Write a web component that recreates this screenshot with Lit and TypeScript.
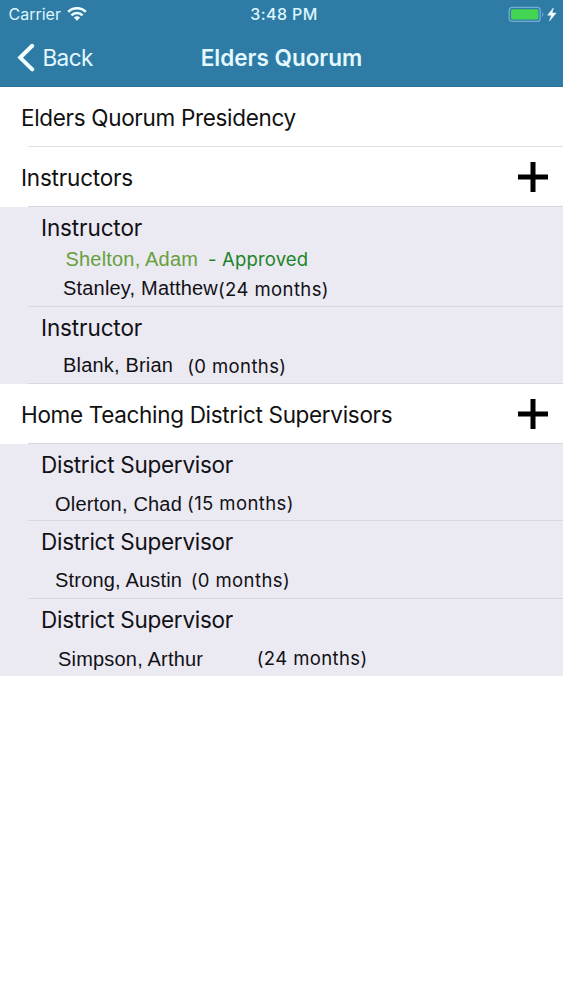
import { LitElement, html, css } from "lit";
import { customElement, property } from "lit/decorators.js";

interface Line {
  name: string;
  note: string;
  kind: string;
}

interface Calling {
  title: string;
  lines: Line[];
}

interface Section {
  title: string;
  addable: boolean;
  callings: Calling[];
}

const SECTIONS: Section[] = [
  { title: "Elders Quorum Presidency", addable: false, callings: [] },
  {
    title: "Instructors",
    addable: true,
    callings: [
      {
        title: "Instructor",
        lines: [
          { name: "Shelton, Adam", note: "- Approved", kind: "proposed" },
          { name: "Stanley, Matthew", note: "(24 months)", kind: "current" },
        ],
      },
      { title: "Instructor", lines: [{ name: "Blank, Brian", note: "(0 months)", kind: "single" }] },
    ],
  },
  {
    title: "Home Teaching District Supervisors",
    addable: true,
    callings: [
      { title: "District Supervisor", lines: [{ name: "Olerton, Chad", note: "(15 months)", kind: "first" }] },
      { title: "District Supervisor", lines: [{ name: "Strong, Austin", note: "(0 months)", kind: "second" }] },
      { title: "District Supervisor", lines: [{ name: "Simpson, Arthur", note: "(24 months)", kind: "third" }] },
    ],
  },
];

@customElement("status-bar")
class StatusBar extends LitElement {
  static styles = css`
    :host { display: grid; grid-template-columns: 1fr auto 1fr; height: 29px; align-items: center; color: #dff6ff; }
    .left { display: flex; align-items: center; padding-left: 8.5px; gap: 6px; }
    .carrier { font-size: 16px; letter-spacing: 0; line-height: 29px; }
    .time { font-size: 16px; font-weight: 500; letter-spacing: 0.4px; line-height: 29px; padding-left: 5px; }
    .right { display: flex; justify-content: flex-end; align-items: center; padding-right: 5px; }
    svg { display: block; }
  `;
  render() {
    return html`
      <div class="left">
        <span class="carrier">Carrier</span>
        <svg width="20" height="15" viewBox="0 0 20 15" fill="none" stroke="#f2ffff" stroke-width="2.6">
          <path d="M1.2 4.9a12.4 12.4 0 0 1 17.6 0" />
          <path d="M4.4 8.4a7.9 7.9 0 0 1 11.2 0" />
          <path d="M10 13.7 6.9 10.6a4.4 4.4 0 0 1 6.2 0z" fill="#f2ffff" stroke="none" />
        </svg>
      </div>
      <span class="time">3:48 PM</span>
      <div class="right">
        <svg width="50" height="18" viewBox="0 0 50 18">
          <rect x="1.2" y="1.4" width="31" height="14" rx="3" fill="none" stroke="#74abd3" stroke-width="1.3" />
          <rect x="3" y="3.2" width="27.4" height="10.4" rx="1.6" fill="#43d551" />
          <path d="M34.2 6.1q2.4 2.4 0 4.8z" fill="#74abd3" />
          <path d="M45.3 2 39.6 9.2h3.8l-1.9 5.8 6.6-7.9h-4z" fill="#f4ffff" stroke="#f4ffff" stroke-width=".5" />
        </svg>
      </div>
    `;
  }
}

@customElement("nav-bar")
class NavBar extends LitElement {
  static styles = css`
    :host { display: grid; grid-template-columns: 1fr auto 1fr; height: 58px; align-items: center; color: #e4f8ff; }
    .back { display: flex; align-items: center; padding-left: 17px; gap: 7.5px; line-height: 58px; font-size: 22.5px; letter-spacing: -0.6px; }
    .title { font-size: 22.5px; font-weight: 600; letter-spacing: 0; line-height: 58px; }
    svg { display: block; }
  `;
  render() {
    return html`
      <div class="back">
        <svg width="18" height="30" viewBox="0 0 18 30" fill="none" stroke="#f2ffff" stroke-width="4" stroke-linecap="round" stroke-linejoin="miter">
          <path d="M15.2 2.8 3.2 14.6l12 11.8" />
        </svg>
        <span>Back</span>
      </div>
      <span class="title">Elders Quorum</span>
    `;
  }
}

@customElement("calling-row")
class CallingRow extends LitElement {
  @property({ attribute: false }) calling!: Calling;
  static styles = css`
    :host { display: block; padding: 7px 0 0 41px; box-sizing: border-box; height: 77.3px; }
    :host(.tall) { height: 99.8px; }
    .title { font-size: 22.5px; line-height: 28px; letter-spacing: -0.12px; color: #111116; }
    .title.long { letter-spacing: -0.27px; }
    .line { display: flex; height: 24px; line-height: 24px; white-space: pre; color: #111116; }
    .name { font: 20px/24px "Liberation Sans", Arial, sans-serif; letter-spacing: 0.19px; }
    .note { font-size: 18.5px; letter-spacing: 0.4px; }
    .proposed { padding: 5px 0 0 24.5px; }
    .proposed .name { color: #66a03c; }
    .proposed .note { color: #1c8428; margin-left: 10px; letter-spacing: 0.15px; }
    .current { padding: 5px 0 0 22px; }
    .current .note { margin-top: 1px; }
    .single { padding: 11px 0 0 22px; }
    .single .note { margin: 1px 0 0 14px; }
    .first { padding: 13px 0 0 14px; }
    .first .note { margin: -1px 0 0 5px; }
    .second { padding: 12px 0 0 14px; }
    .second .note { margin-left: 8.5px; }
    .third { padding: 13px 0 0 17px; }
    .third .note { margin: -1px 0 0 53.5px; }
  `;
  render() {
    return html`
      <div class="title ${this.calling.title.length > 12 ? "long" : ""}">${this.calling.title}</div>
      ${this.calling.lines.map(
        (l) => html`<div class="line ${l.kind}"><span class="name">${l.name}</span><span class="note">${l.note}</span></div>`
      )}
    `;
  }
}

@customElement("app-root")
class AppRoot extends LitElement {
  static styles = css`
    :host { display: block; height: 1000px; background: #fff; overflow: hidden; font-family: Inter, "Noto Sans", sans-serif; color: #111; }
    .header { height: 87px; background: #2e7ca6; box-shadow: inset 0 -1px #2a719a; }
    .section { display: flex; height: 60px; align-items: center; justify-content: space-between; padding: 0 14px 0 21px; box-sizing: border-box; font-size: 22.5px; color: #111; }
    .label { line-height: 28px; padding-top: 2px; white-space: nowrap; letter-spacing: -0.2px; }
    .label.long { letter-spacing: -0.32px; }
    .ruled { background: linear-gradient(#d8d7dc, #d8d7dc) 28px 100% / 100% 1px no-repeat; }
    .section.light { background-image: linear-gradient(#e0e0e0, #e0e0e0); }
    .group { background: #ebe9f2; }
    svg { display: block; }
  `;
  render() {
    return html`
      <div class="header"><status-bar></status-bar><nav-bar></nav-bar></div>
      ${SECTIONS.map(
        (s) => html`
          <div class="section ruled ${s.callings.length ? "" : "light"}">
            <span class="label ${s.title.length > 12 ? "long" : ""}">${s.title}</span>
            ${s.addable
              ? html`<svg width="32" height="32" viewBox="0 0 32 32"><path d="M16 1v30M1 16h30" stroke="#000" stroke-width="5" /></svg>`
              : ""}
          </div>
          <div class="group">
            ${s.callings.map(
              (c, i) => html`<calling-row
                class="${c.lines.length > 1 ? "tall" : ""} ${i < s.callings.length - 1 || s !== SECTIONS[SECTIONS.length - 1] ? "ruled" : ""}"
                .calling=${c}
              ></calling-row>`
            )}
          </div>
        `
      )}
    `;
  }
}
